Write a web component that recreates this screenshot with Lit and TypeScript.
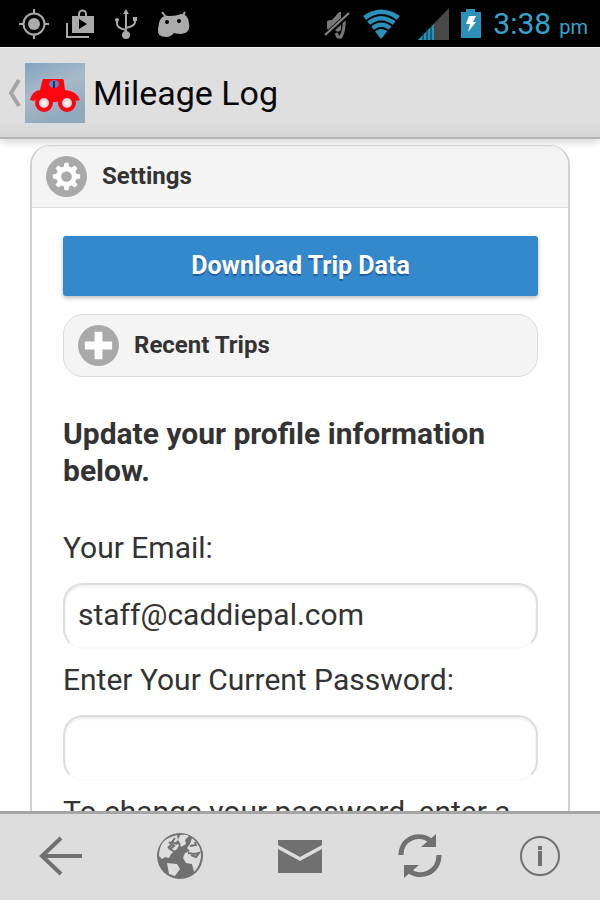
import { LitElement, html, css, svg } from "lit";
import { customElement, property } from "lit/decorators.js";

@customElement("status-bar")
class StatusBar extends LitElement {
  static styles = css`
    :host { display: flex; align-items: center; justify-content: space-between; height: 47px; padding: 0 12px 0 19px; background: #000; color: #33a5cf; box-sizing: border-box; flex: none; }
    .group { display: flex; align-items: center; }
    .left { gap: 16px; }
    .right { gap: 12px; }
    svg { display: block; }
    .clock { display: flex; align-items: baseline; gap: 8px; padding-top: 3px; font: 30px/40px Roboto, sans-serif; }
    .meridiem { font-size: 20px; }
  `;
  render() {
    return html`
      <div class="group left">
        <svg width="30" height="32" viewBox="0 0 30 32" fill="none" stroke="#aaa" stroke-width="2"><circle cx="15" cy="16" r="10.5"/><circle cx="15" cy="16" r="6" fill="#aaa" stroke="none"/><path d="M15 1v5M15 26v5M0 16h5M25 16h5"/></svg>
        <svg width="30" height="32" viewBox="0 0 30 32"><path d="M2 15v14h22" fill="none" stroke="#aaa" stroke-width="2"/><path fill="#aaa" fill-rule="evenodd" d="M7 8h6V6a4.500 4.500 0 0 1 9 0v2h7v17H7zM15 8h5V6a2.500 2.500 0 0 0-5 0zM14 11v10l8-5z"/></svg>
        <svg width="30" height="32" viewBox="0 0 30 32" fill="none" stroke="#aaa" stroke-width="2"><path d="M15 5v22M15 22Q6 20 6 16V12M15 20Q24 18 24 14V12"/><path d="M15 1l-3 5h6zM22 9h4v4h-4z" fill="#aaa" stroke="none"/><circle cx="6" cy="12" r="2" fill="#aaa" stroke="none"/><circle cx="15" cy="27" r="4" fill="#aaa" stroke="none"/></svg>
        <svg width="34" height="32" viewBox="0 0 34 32"><path d="M5 4l4 5M28 4l-3 5" stroke="#aaa" stroke-width="2"/><path fill="#aaa" d="M2 15Q4 6 13 8Q19 8 24 6Q31 6 32 15Q34 25 24 26Q20 26 17 25Q14 29 9 29Q0 29 1 21Z"/><circle cx="10" cy="14" r="2"/><circle cx="22" cy="13" r="2"/></svg>
      </div>
      <div class="group right">
        <svg width="26" height="32" viewBox="0 0 26 32"><path fill="#777" d="M3 14q0-2 3-2h2l7-8h2v18l-3 2q-4-3-8-2-3 0-3-2z"/><path d="M12 25l2 4h3q4-8 3-20" fill="none" stroke="#777" stroke-width="3"/><path d="M1 28L25 6" stroke="#000" stroke-width="5"/><path d="M1 27L25 5" stroke="#888" stroke-width="2"/></svg>
        <svg width="39" height="32" viewBox="0 0 39 32"><path fill="#2b91b9" d="M1 8Q19-5 38 8L19 31z"/><g fill="none" stroke="#000" stroke-width="2"><path d="M3 14Q19 0 36 14M7 19Q19 8 32 19M11 24Q19 16 28 24"/></g></svg>
        <svg width="36" height="34" viewBox="-4 0 36 34"><path fill="#484848" d="M32 1v32H1z"/><path fill="#2b91b9" d="M17 17v16H1z"/><path d="M6 25v8M10 21v12M14 17v16" stroke="#0b2b38" stroke-width="1"/></svg>
        <svg width="20" height="32" viewBox="0 0 20 32"><path fill="#2b91b9" d="M0 4h5V1h9v3h6v26H0z"/><path fill="#fff" d="M8 8h7l-3 6h3L7 24l2-8H5z"/></svg>
        <div class="clock"><span>3:38</span><span class="meridiem">pm</span></div>
      </div>`;
  }
}

@customElement("title-bar")
class TitleBar extends LitElement {
  static styles = css`
    :host { display: flex; align-items: center; flex: none; height: 92px; padding: 0 8px; box-sizing: border-box; background: linear-gradient(#dfdfdf 80%, #d4d4d4); border-top: 1px solid #f2f2f2; border-bottom: 2px solid #b5b5b5; box-shadow: 0 2px 10px #0003; position: relative; z-index: 1; }
    .up { display: flex; align-items: center; gap: 4px; border: 0; background: none; padding: 0; }
    h1 { margin: 0 0 0 8px; font: 400 34px/44px Roboto, sans-serif; color: #080808; white-space: nowrap; }
    svg { display: block; }
  `;
  render() {
    return html`
      <button class="up" aria-label="Navigate up">
        <svg width="13" height="28" viewBox="0 0 13 28"><path d="M11 1L3 14l8 13" fill="none" stroke="#a5a5a5" stroke-width="4"/></svg>
        <svg width="60" height="60" viewBox="0 0 60 60">
          <defs>
            <linearGradient id="sky" x2=".4" y2="1"><stop stop-color="#82a4bf"/><stop offset=".5" stop-color="#a8b9c8"/><stop offset="1" stop-color="#91a9bd"/></linearGradient>
            <radialGradient id="hub"><stop stop-color="#fff"/><stop offset="1" stop-color="#cdb3ba"/></radialGradient>
          </defs>
          <path fill="url(#sky)" d="M0 0h60v60H0z"/>
          <path fill="#fb0510" d="M18 16h19q2 0 2 3l1 8Q52 28 55 37l-4 1Q49 34 42 34L32 39h-4L19 34Q12 34 9 38l-4-1Q7 28 15 27l2-8z"/>
          <circle cx="19" cy="40" r="7" fill="url(#hub)" stroke="#fb0510" stroke-width="4"/><circle cx="42" cy="40" r="7" fill="url(#hub)" stroke="#fb0510" stroke-width="4"/>
          <ellipse cx="29" cy="21" rx="5" ry="4" fill="#6b7fb4"/><path d="M29 18v7" stroke="#202d60" stroke-width="2"/>
        </svg>
      </button>
      <h1>Mileage Log</h1>`;
  }
}

@customElement("section-header")
class SectionHeader extends LitElement {
  @property() label = "";
  @property() icon = "gear";
  static styles = css`
    :host { display: block; }
    button { display: flex; align-items: center; gap: 15px; width: 100%; height: 61px; padding: 0 14px 1px; border: 0; background: none; font: 700 24px/30px Roboto, sans-serif; color: #333; text-align: left; }
    svg { display: block; flex: none; }
  `;
  render() {
    const glyph = this.icon === "gear"
      ? svg`<circle cx="21" cy="21" r="8" fill="none" stroke="#fff" stroke-width="5"/><g fill="#fff">${[0, 45, 90, 135, 180, 225, 270, 315].map(a => svg`<path transform="rotate(${a} 21 21)" d="M18 12L19 7h4l1 5z"/>`)}</g>`
      : svg`<path d="M21 7v28M7 21h28" stroke="#fff" stroke-width="8"/>`;
    return html`<button><svg width="41" height="41" viewBox="0 0 42 42"><circle cx="21" cy="21" r="21" fill="#a9a9a9"/>${glyph}</svg><span>${this.label}</span></button>`;
  }
}

const toolbarIcons = [
  { name: "Back", art: svg`<path d="M25 6L6 24l19 18M6 24h40" fill="none" stroke="#707070" stroke-width="4"/>` },
  { name: "Website", art: svg`<circle cx="24" cy="24" r="23" fill="#707070"/><g fill="#ddd"><path d="M3 24Q3 9 15 5L21 3 22 8 19 11 23 13 21 17 15 22 13 26 9 25 6 27z"/><path d="M24 3Q30 2 33 4L29 8 30 12 25 15 24 11 22 8z"/><path d="M36 6Q46 14 45 25Q44 34 38 40L36 32 30 31 27 26 29 21 34 19 31 16 34 12z"/><path d="M11 31L21 32 24 37 19 44 13 42z"/></g><path d="M13 10l5 4-4 3 5 3M12 16l4-4M19 6l-3 4 5 2M34 14l6-1-1-3M32 21l6 1 5-1-3 4-5-2" fill="none" stroke="#707070" stroke-width="2"/>` },
  { name: "Mail", art: svg`<path d="M2 8h44v5L24 25 2 13zM2 17l22 12 22-12v24H2z" fill="#707070"/>` },
  { name: "Refresh", art: svg`<path d="M5 23C5 6 24-1 36 10M43 23C43 41 24 48 12 38" fill="none" stroke="#707070" stroke-width="5"/><path d="M40 2v13H25zM8 46V33h15z" fill="#707070"/>` },
  { name: "Information", art: svg`<circle cx="24" cy="24" r="19" fill="none" stroke="#707070" stroke-width="2"/><path d="M24 19v15M24 14v4" stroke="#707070" stroke-width="4"/>` },
];

@customElement("bottom-toolbar")
class BottomToolbar extends LitElement {
  static styles = css`
    :host { display: block; flex: none; border-top: 3px solid #a5a5a5; background: #ddd; }
    nav { display: grid; grid-template-columns: repeat(5, 1fr); height: 83px; padding-bottom: 3px; }
    button { display: grid; place-items: center; border: 0; padding: 0; background: none; }
    svg { display: block; }
  `;
  render() {
    return html`<nav>${toolbarIcons.map(i => html`<button aria-label=${i.name}><svg width="48" height="48" viewBox="0 0 48 48">${i.art}</svg></button>`)}</nav>`;
  }
}

@customElement("app-root")
class AppRoot extends LitElement {
  static styles = css`
    :host { display: flex; flex-direction: column; height: 100vh; background: #fff; color: #333; font: 30px/37px Roboto, sans-serif; }
    main { flex: 1; min-height: 0; overflow: hidden; padding: 6px 30px 0; }
    .panel { border: 2px solid #cfcfcf; border-top: 1px solid #ddd; border-radius: 20px 20px 0 0; }
    .head { background: #f4f4f4; border-bottom: 1px solid #ddd; border-radius: 19px 19px 0 0; }
    .body { padding: 28px 30px 28px 31px; }
    .download { display: block; width: 100%; height: 60px; padding: 0; border: 0; border-radius: 3px; background: #3488cc; color: #fff; font: 700 25px/30px Roboto, sans-serif; text-shadow: 0 2px 1px #0055; box-shadow: 0 2px 4px #0004; }
    .trips { margin-top: 18px; border: 1px solid #dadada; border-radius: 20px; background: #f4f4f4; }
    h2 { margin: 38px 0 40px; font: inherit; font-weight: 700; }
    form { display: flex; flex-direction: column; }
    label { display: block; white-space: nowrap; }
    input { box-sizing: border-box; width: 100%; height: 66px; margin: 17px 0 12px; padding: 0 13px 4px; border: 2px solid #ddd; border-bottom-color: #fafafa; border-radius: 20px; background: #fff; box-shadow: inset 0 2px 3px #0001; font: inherit; color: #333; outline: 0; }
  `;
  render() {
    return html`
      <status-bar></status-bar>
      <title-bar></title-bar>
      <main>
        <section class="panel">
          <section-header class="head" label="Settings" icon="gear"></section-header>
          <div class="body">
            <button class="download">Download Trip Data</button>
            <section-header class="trips" label="Recent Trips" icon="plus"></section-header>
            <h2>Update your profile information below.</h2>
            <form>
              <label for="email">Your Email:</label>
              <input id="email" type="email" value="staff@caddiepal.com">
              <label for="current">Enter Your Current Password:</label>
              <input id="current" type="password">
              <label for="next">To change your password, enter a</label>
              <input id="next" type="password">
            </form>
          </div>
        </section>
      </main>
      <bottom-toolbar></bottom-toolbar>`;
  }
}
